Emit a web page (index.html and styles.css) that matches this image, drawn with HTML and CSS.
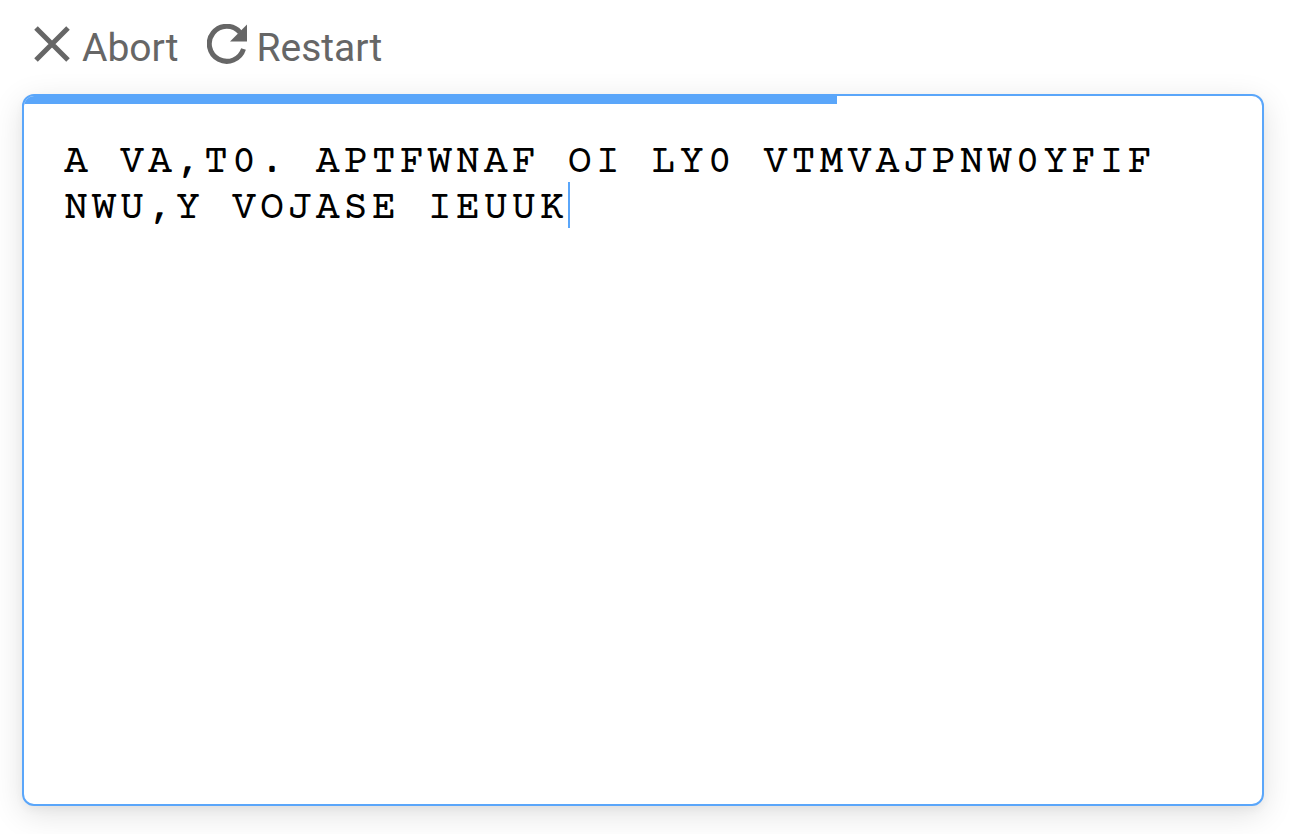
FILE: index.html
```html
<!DOCTYPE html>
<html lang="en">
<head>
<meta charset="utf-8">
<meta name="viewport" content="width=device-width, initial-scale=1">
<title>Receive</title>
<link rel="stylesheet" href="styles.css">
</head>
<body>
<nav class="toolbar">
  <button class="action" type="button">
    <svg class="icon" viewBox="0 0 40 40" aria-hidden="true"><path d="M4 4L36 36M36 4L4 36" fill="none" stroke="currentColor" stroke-width="5"/></svg>
    <span class="label">Abort</span>
  </button>
  <button class="action" type="button">
    <svg class="icon" viewBox="0 0 40 40" aria-hidden="true"><path d="M36.500 25A17.500 17.500 0 1 1 33 8.300" fill="none" stroke="currentColor" stroke-width="5"/><path d="M40 .5V17.500H23z" fill="currentColor"/></svg>
    <span class="label">Restart</span>
  </button>
</nav>
<main class="card">
  <div class="progress" role="progressbar" aria-label="Progress" aria-valuemin="0" aria-valuemax="100" aria-valuenow="66"><div class="progress-fill" style="width:65.7%"></div></div>
  <div class="copy" role="textbox" aria-label="Copied text" aria-multiline="true" tabindex="0">A VA,T0. APTFWNAF OI LY0 VTMVAJPNW0YFIF NWU,Y VOJASE IEUUK<span class="caret"></span></div>
</main>
</body>
</html>
```

FILE: styles.css
```css
* {
  box-sizing: border-box;
}

body {
  display: flex;
  flex-direction: column;
  min-height: 100vh;
  margin: 0;
  padding: 20px 26px 28px 22px;
  background: #fff;
}

.toolbar {
  display: flex;
  gap: 28px;
  padding: 0 10px;
  margin-bottom: 22px;
}

.action {
  display: flex;
  align-items: flex-start;
  gap: 10px;
  padding: 4px 0 0;
  border: 0;
  background: none;
  color: #666;
  font: 39px/48px Roboto, sans-serif;
  cursor: pointer;
}

.icon {
  width: 40px;
  height: 40px;
}

.card {
  flex: 1;
  overflow: hidden;
  border: 2px solid #5aa6fa;
  border-radius: 12px;
  background: #fff;
  box-shadow: 0 4px 8px rgba(0, 0, 0, 0.04), 0 8px 32px rgba(0, 0, 0, 0.12);
}

.progress-fill {
  height: 8px;
  background: #5aa6fa;
}

.copy {
  padding: 37px 40px;
  outline: 0;
  color: #000;
  font: 40px/46px "Courier Prime", Courier, "Liberation Mono", monospace;
  letter-spacing: 4px;
}

.caret {
  display: inline-block;
  width: 2px;
  height: 46px;
  margin: -5px 0 5px;
  background: #5aa6fa;
  vertical-align: top;
}
```
